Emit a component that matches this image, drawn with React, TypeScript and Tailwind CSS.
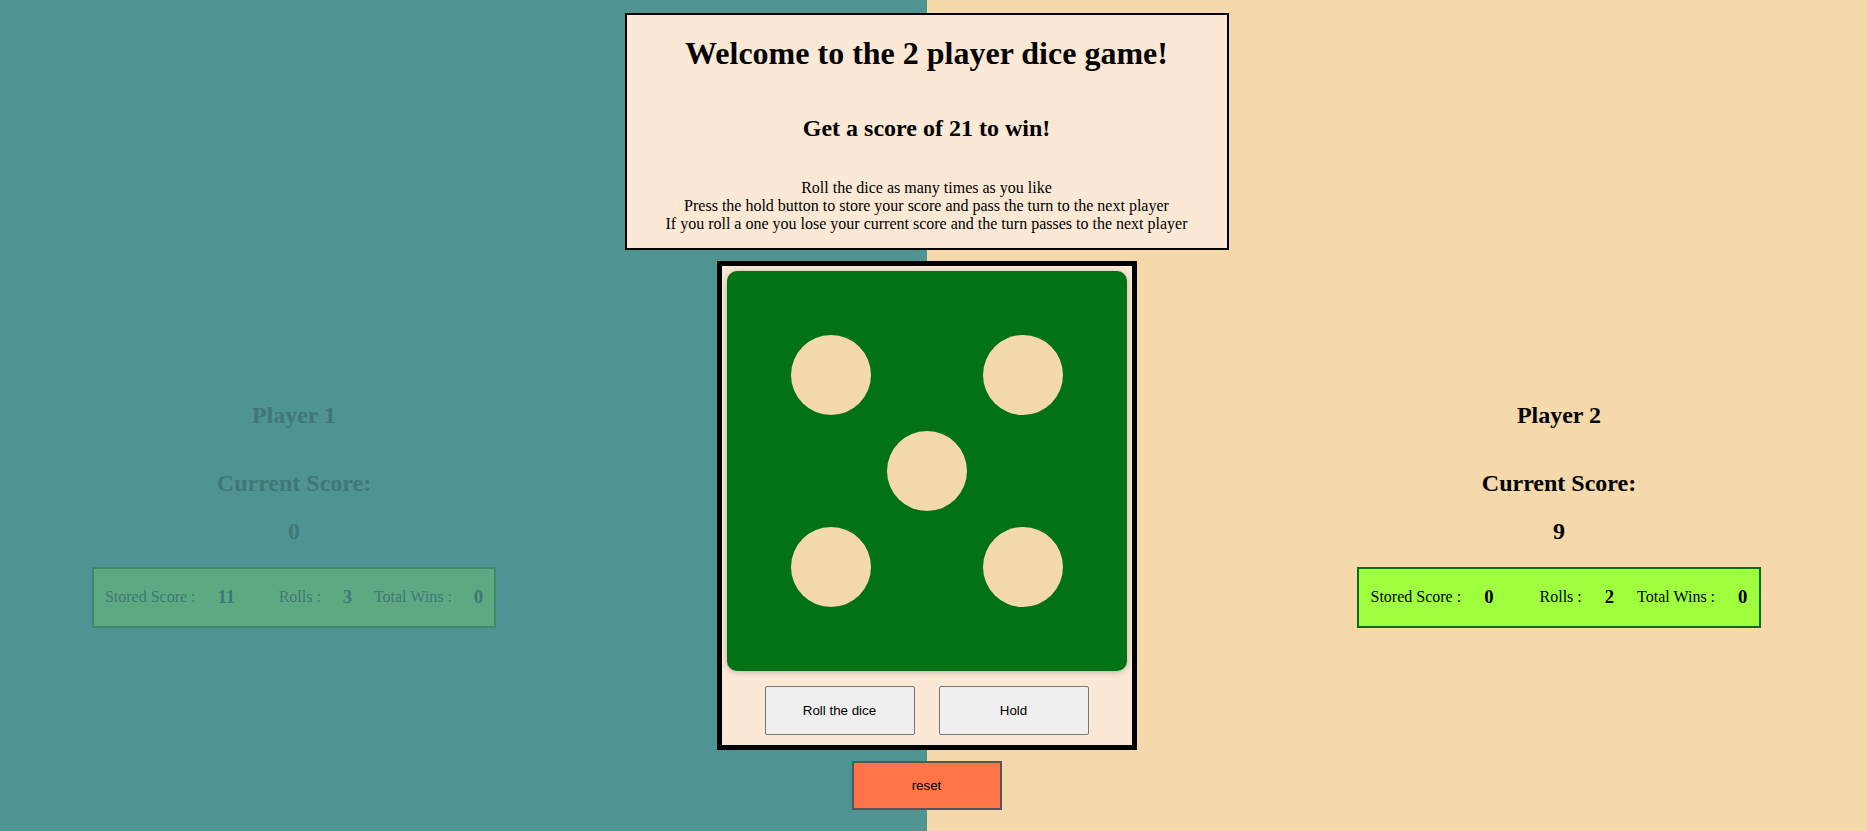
import React from "react";

const serif = "font-['Liberation_Serif','Times_New_Roman',serif]";

type PlayerProps = {
  name: string;
  current: number;
  stored: number;
  rolls: number;
  wins: number;
  active: boolean;
};

const PlayerPanel = ({ name, current, stored, rolls, wins, active }: PlayerProps) => {
  const text = active ? "text-black" : "text-[#3e7878]";
  const box = active
    ? "bg-[#9fff3f] border-[#017316]"
    : "bg-[#5fa982] border-[#3e8b6c]";
  return (
    <section className={`w-[588px] flex flex-col items-center pt-[402px] ${text}`}>
      <h2 className="text-[24px] font-bold leading-[1.15]">{name}</h2>
      <h2 className="text-[24px] font-bold leading-[1.15] mt-[40px]">Current Score:</h2>
      <h2 className="text-[24px] font-bold leading-[1.15] mt-[21px]">{current}</h2>
      <div className={`mt-[21px] w-[404px] h-[61px] border-2 flex items-center justify-around ${box}`}>
        <p className="text-[16px]">Stored Score :</p>
        <h3 className="text-[18.72px] font-bold">{stored}</h3>
        <span />
        <p className="text-[16px]">Rolls :</p>
        <h3 className="text-[18.72px] font-bold">{rolls}</h3>
        <p className="text-[16px]">Total Wins :</p>
        <h3 className="text-[18.72px] font-bold">{wins}</h3>
      </div>
    </section>
  );
};

// five face: corners plus centre
const pips = [true, false, true, false, true, false, true, false, true];

const Dice = () => (
  <div className="w-[400px] h-[400px] rounded-[10px] bg-[#017315] shadow-[0_1px_6px_rgba(0,0,0,0.25)] grid grid-cols-3 grid-rows-3 gap-[16px] p-[64px]">
    {pips.map((on, i) => (
      <div key={i} className={on ? "w-[80px] h-[80px] rounded-full bg-[#f4d9ab]" : ""} />
    ))}
  </div>
);

const btn =
  "w-[150px] h-[49px] pt-px text-[13.33px] text-black font-['Liberation_Sans',Arial,sans-serif]";

export default function App() {
  return (
    <div className={`min-h-screen bg-[#f5d9ab] ${serif}`}>
      <div className="w-[1853px] h-[831px] flex bg-[linear-gradient(to_right,#509393_927px,#f5d9ab_927px)]">
        <PlayerPanel name="Player 1" current={0} stored={11} rolls={3} wins={0} active={false} />

        <main className="flex-1 flex flex-col items-center">
          <div className="mt-[13px] w-[604px] border-2 border-black bg-[#fbe9d6] flex flex-col items-center text-center text-black">
            <h1 className="text-[32px] font-bold leading-[1.15] mt-[20px] mb-[21px]">
              Welcome to the 2 player dice game!
            </h1>
            <h2 className="text-[24px] font-bold leading-[1.15] mt-[22px] mb-[20px]">
              Get a score of 21 to win!
            </h2>
            <p className="text-[16px] leading-[17.7px] mt-[17px] mb-[15px]">
              Roll the dice as many times as you like
              <br />
              Press the hold button to store your score and pass the turn to the next player
              <br />
              If you roll a one you lose your current score and the turn passes to the next player
            </p>
          </div>

          <div className="mt-[11px] border-[5px] border-black bg-[#fbe9d6] p-[5px] pb-[10px] flex flex-col items-center">
            <Dice />
            <div className="mt-[15px] flex gap-[24px]">
              <button className={`${btn} bg-[#efefef] border border-[#767676] rounded-[2px]`}>
                Roll the dice
              </button>
              <button className={`${btn} bg-[#efefef] border border-[#767676] rounded-[2px]`}>
                Hold
              </button>
            </div>
          </div>

          <button className={`${btn} mt-[11px] bg-[#ff7549] border-2 border-[#555555]`}>reset</button>
        </main>

        <PlayerPanel name="Player 2" current={9} stored={0} rolls={2} wins={0} active />
      </div>
    </div>
  );
}
